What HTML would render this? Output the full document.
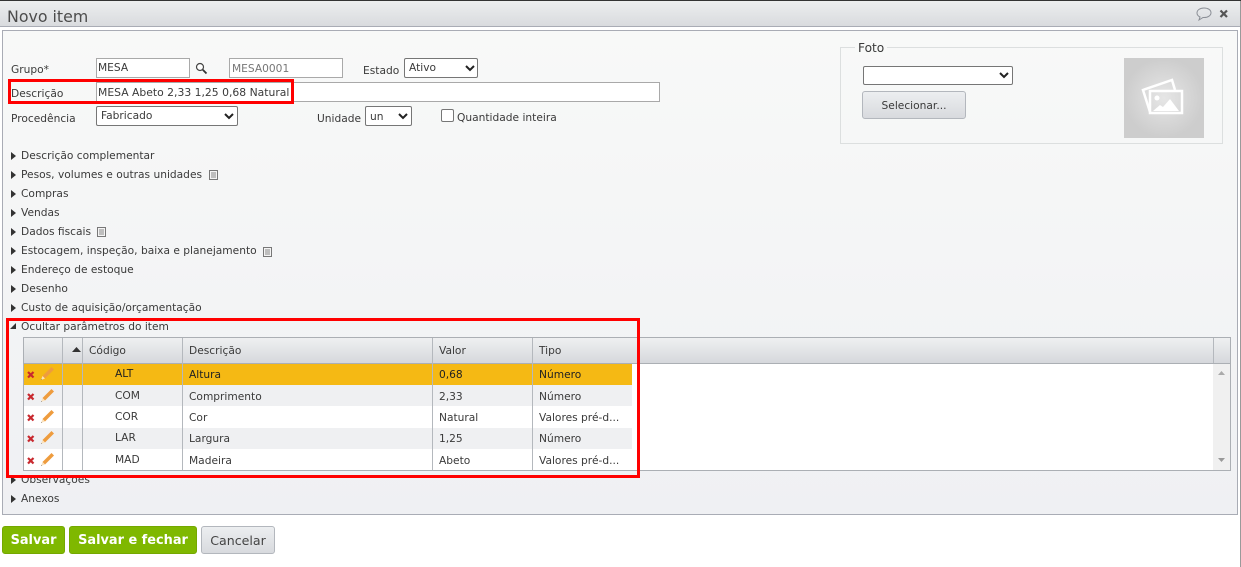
<!DOCTYPE html>
<html lang="pt"><head><meta charset="utf-8"><title>Novo item</title>
<style>
html,body{margin:0;padding:0;background:#fff}
#p{position:relative;width:1241px;height:567px;overflow:hidden;background:#fff;font-family:"DejaVu Sans","Liberation Sans",sans-serif;font-size:10.65px;color:#3a3a3a}
#p div,#p svg{position:absolute}
.t{white-space:nowrap;line-height:14px;height:14px;transform:translateY(1px)}
.in{background:#fff;border:1px solid #a9a9a9;box-sizing:border-box}
.sel{background:#fff;border:1px solid #767676;border-radius:2px;box-sizing:border-box}
.r{border:3px solid #f00;box-sizing:border-box}
.v{width:1px;background:#b4b8bd}
.a{width:0;height:0;border-left:5px solid #333;border-top:4px solid transparent;border-bottom:4px solid transparent;transform:translateY(1px)}
.b{border-radius:3px;box-sizing:border-box;text-align:center;line-height:27px;height:28px;top:526px}
.g{background:#7fb800;border:1px solid #74a800;color:#fff;font-weight:bold;font-size:12.9px}
</style></head><body><div id="p">
<div style="left:0;top:0;width:1241px;height:1px;background:#333"></div>
<div style="left:0;top:1px;width:1241px;height:25px;background:linear-gradient(#eceeef,#d9dbde)"></div>
<div style="left:0;top:26px;width:1241px;height:1px;background:#a9acb5"></div>
<div style="left:1240px;top:1px;width:1px;height:566px;background:#9a9a9a"></div>
<div class="t" style="left:7px;top:7px;height:18px;line-height:18px;font-size:15.8px;color:#4c4c4c">Novo item</div>
<svg style="left:1195px;top:6px" width="18" height="16" viewBox="0 0 18 16"><path d="M9 2C5 2 2 4 2 7c0 2 1 3 3 4l-1 3 4-2.500h1c4 0 7-2 7-4.800S13 2 9 2z" fill="none" stroke="#8b8f96"/></svg>
<svg style="left:1219px;top:9px" width="10" height="10" viewBox="0 0 10 10"><path d="M1.500 1.500l6.500 6.500M8 1.500L1.500 8" stroke="#555" stroke-width="2.200"/></svg>

<div style="left:2px;top:30px;width:1236px;height:485px;box-sizing:border-box;border:1px solid #a9acb5;background:linear-gradient(#f8f9f8,#eff0f3)"></div>

<div class="t" style="left:11px;top:62px">Grupo*</div>
<div class="in" style="left:96px;top:58px;width:94px;height:20px"></div>
<div class="t" style="left:98px;top:60px">MESA</div>
<svg style="left:195px;top:62px" width="13" height="13" viewBox="0 0 13 13"><circle cx="5" cy="5" r="3.500" fill="#fff" stroke="#444" stroke-width="1.200"/><path d="M7.800 7.800L11.500 11.500" stroke="#333" stroke-width="1.800"/></svg>
<div class="in" style="left:229px;top:58px;width:114px;height:20px"></div>
<div class="t" style="left:232px;top:61px;color:#777">MESA0001</div>
<div class="t" style="left:363px;top:63px">Estado</div>
<div class="sel" style="left:404px;top:58px;width:74px;height:20px"></div>
<div class="t" style="left:409px;top:60px">Ativo</div>
<svg style="left:465px;top:65px" width="10" height="7" viewBox="0 0 10 7"><path d="M1 1l4 4 4-4" fill="none" stroke="#222" stroke-width="2"/></svg>

<div class="in" style="left:96px;top:82px;width:564px;height:20px"></div>
<div class="t" style="left:98px;top:85px;font-size:10.8px">MESA Abeto 2,33 1,25 0,68 Natural</div>
<div class="t" style="left:11px;top:86px">Descrição</div>
<div class="r" style="left:8px;top:79px;width:286px;height:25px"></div>

<div class="t" style="left:11px;top:111px">Procedência</div>
<div class="sel" style="left:96px;top:106px;width:142px;height:20px"></div>
<div class="t" style="left:101px;top:108px">Fabricado</div>
<svg style="left:224px;top:113px" width="10" height="7" viewBox="0 0 10 7"><path d="M1 1l4 4 4-4" fill="none" stroke="#222" stroke-width="2"/></svg>
<div class="t" style="left:317px;top:111px">Unidade</div>
<div class="sel" style="left:365px;top:106px;width:47px;height:20px"></div>
<div class="t" style="left:370px;top:109px">un</div>
<svg style="left:398px;top:113px" width="10" height="7" viewBox="0 0 10 7"><path d="M1 1l4 4 4-4" fill="none" stroke="#222" stroke-width="2"/></svg>
<div style="left:441px;top:109px;width:13px;height:13px;box-sizing:border-box;border:1px solid #767676;border-radius:2px;background:#fff"></div>
<div class="t" style="left:457px;top:110px">Quantidade inteira</div>

<div style="left:840px;top:47px;width:383px;height:97px;box-sizing:border-box;border:1px solid #dcdfdf"></div>
<div class="t" style="left:855px;top:40px;padding:0 3px;background:#f8f9f8;font-size:12.2px">Foto</div>
<div class="sel" style="left:863px;top:66px;width:150px;height:19px"></div>
<svg style="left:999px;top:72px" width="10" height="7" viewBox="0 0 10 7"><path d="M1 1l4 4 4-4" fill="none" stroke="#222" stroke-width="2"/></svg>
<div class="t" style="left:862px;top:91px;width:104px;height:28px;line-height:28px;text-align:center;box-sizing:border-box;border:1px solid #b3b7bd;border-radius:3px;background:linear-gradient(#eceef0,#d8dade);transform:none">Selecionar...</div>
<div style="left:1124px;top:58px;width:80px;height:80px;background:radial-gradient(circle,#e6e6e6,#cdcdcd 70%)"></div>
<svg style="left:1124px;top:58px" width="80" height="80" viewBox="0 0 80 80"><path d="M26 54L19 32l29-10 3 10" fill="none" stroke="#fff" stroke-width="2.500"/><rect x="26" y="33" width="32" height="22" fill="none" stroke="#fff" stroke-width="2.500"/><circle cx="33" cy="40" r="2.500" fill="#fff"/><path d="M29 53l7-6 3 2 7-8 9 12z" fill="#fff"/></svg>

<div class="a" style="left:11px;top:151px"></div><div class="t" style="left:21px;top:148px">Descrição complementar</div>
<div class="a" style="left:11px;top:170px"></div><div class="t" style="left:21px;top:167px">Pesos, volumes e outras unidades</div>
<div class="a" style="left:11px;top:189px"></div><div class="t" style="left:21px;top:186px">Compras</div>
<div class="a" style="left:11px;top:208px"></div><div class="t" style="left:21px;top:205px">Vendas</div>
<div class="a" style="left:11px;top:227px"></div><div class="t" style="left:21px;top:224px">Dados fiscais</div>
<div class="a" style="left:11px;top:246px"></div><div class="t" style="left:21px;top:243px">Estocagem, inspeção, baixa e planejamento</div>
<div class="a" style="left:11px;top:265px"></div><div class="t" style="left:21px;top:262px">Endereço de estoque</div>
<div class="a" style="left:11px;top:284px"></div><div class="t" style="left:21px;top:281px">Desenho</div>
<div class="a" style="left:11px;top:303px"></div><div class="t" style="left:21px;top:300px">Custo de aquisição/orçamentação</div>
<svg style="left:209px;top:170px" width="10" height="11" viewBox="0 0 10 11"><rect x=".5" y=".5" width="8" height="9" fill="#f4f4f4" stroke="#777"/><path d="M2 3h5M2 5h5M2 7h5" stroke="#888"/></svg>
<svg style="left:97px;top:227px" width="10" height="11" viewBox="0 0 10 11"><rect x=".5" y=".5" width="8" height="9" fill="#f4f4f4" stroke="#777"/><path d="M2 3h5M2 5h5M2 7h5" stroke="#888"/></svg>
<svg style="left:263px;top:247px" width="10" height="11" viewBox="0 0 10 11"><rect x=".5" y=".5" width="8" height="9" fill="#f4f4f4" stroke="#777"/><path d="M2 3h5M2 5h5M2 7h5" stroke="#888"/></svg>
<svg style="left:10px;top:323px" width="7" height="7" viewBox="0 0 7 7"><path d="M0 6h6V0z" fill="#333"/></svg>
<div class="t" style="left:21px;top:319px">Ocultar parâmetros do item</div>

<div style="left:23px;top:337px;width:1208px;height:134px;box-sizing:border-box;border:1px solid #abafb4;background:#fff"></div>
<div style="left:24px;top:338px;width:1206px;height:25px;background:linear-gradient(#eff0f1,#d6d8dc)"></div>
<div style="left:24px;top:363px;width:1206px;height:1px;background:#abafb4"></div>
<div style="left:24px;top:364px;width:608px;height:21px;background:#f5b914"></div>
<div style="left:24px;top:385px;width:608px;height:21px;background:#eff0f2"></div>
<div style="left:24px;top:428px;width:608px;height:21px;background:#eff0f2"></div>
<div style="left:1213px;top:364px;width:17px;height:106px;background:#f0f0f0"></div>
<div class="v" style="left:62px;top:338px;height:132px"></div>
<div class="v" style="left:82px;top:338px;height:132px"></div>
<div class="v" style="left:182px;top:338px;height:132px"></div>
<div class="v" style="left:432px;top:338px;height:132px"></div>
<div class="v" style="left:532px;top:338px;height:132px"></div>
<div class="v" style="left:1213px;top:338px;height:25px"></div>
<svg style="left:72px;top:347px" width="9" height="5" viewBox="0 0 9 5"><path d="M0 5L4.500 0 9 5z" fill="#333"/></svg>
<svg style="left:1217px;top:370px" width="9" height="6" viewBox="0 0 9 6"><path d="M1 5L4.500 1 8 5z" fill="#aaa"/></svg>
<svg style="left:1217px;top:457px" width="9" height="6" viewBox="0 0 9 6"><path d="M1 1L4.500 5 8 1z" fill="#999"/></svg>

<div class="t" style="left:89px;top:343px">Código</div><div class="t" style="left:189px;top:343px">Descrição</div><div class="t" style="left:439px;top:343px">Valor</div><div class="t" style="left:539px;top:343px">Tipo</div>

<div class="t" style="left:115px;top:366px;color:#222">ALT</div><div class="t" style="left:189px;top:367px;color:#222">Altura</div><div class="t" style="left:439px;top:367px;color:#222">0,68</div><div class="t" style="left:539px;top:367px;color:#222">Número</div>
<div class="t" style="left:115px;top:388px">COM</div><div class="t" style="left:189px;top:389px">Comprimento</div><div class="t" style="left:439px;top:389px">2,33</div><div class="t" style="left:539px;top:389px">Número</div>
<div class="t" style="left:115px;top:409px">COR</div><div class="t" style="left:189px;top:410px">Cor</div><div class="t" style="left:439px;top:410px">Natural</div><div class="t" style="left:539px;top:410px">Valores pré-d...</div>
<div class="t" style="left:115px;top:430px">LAR</div><div class="t" style="left:189px;top:431px">Largura</div><div class="t" style="left:439px;top:431px">1,25</div><div class="t" style="left:539px;top:431px">Número</div>
<div class="t" style="left:115px;top:452px">MAD</div><div class="t" style="left:189px;top:453px">Madeira</div><div class="t" style="left:439px;top:453px">Abeto</div><div class="t" style="left:539px;top:453px">Valores pré-d...</div>

<svg style="left:26px;top:370px" width="10" height="10" viewBox="0 0 10 10"><path d="M2 2l5.500 5.500M7.500 2L2 7.500" stroke="#c8282e" stroke-width="2.200"/></svg>
<svg style="left:26px;top:392px" width="10" height="10" viewBox="0 0 10 10"><path d="M2 2l5.500 5.500M7.500 2L2 7.500" stroke="#c8282e" stroke-width="2.200"/></svg>
<svg style="left:26px;top:413px" width="10" height="10" viewBox="0 0 10 10"><path d="M2 2l5.500 5.500M7.500 2L2 7.500" stroke="#c8282e" stroke-width="2.200"/></svg>
<svg style="left:26px;top:434px" width="10" height="10" viewBox="0 0 10 10"><path d="M2 2l5.500 5.500M7.500 2L2 7.500" stroke="#c8282e" stroke-width="2.200"/></svg>
<svg style="left:26px;top:456px" width="10" height="10" viewBox="0 0 10 10"><path d="M2 2l5.500 5.500M7.500 2L2 7.500" stroke="#c8282e" stroke-width="2.200"/></svg>

<svg style="left:40px;top:366px" width="15" height="15" viewBox="0 0 15 15"><path d="M2.500 10L11.500 1l2.500 2.500-9 9z" fill="#ee9c3e"/><path d="M1 14l1.500-4 2.500 2.500z" fill="#fbe2bc"/><path d="M1 14l1-.4-.6-.6z" fill="#555"/></svg>
<svg style="left:40px;top:388px" width="15" height="15" viewBox="0 0 15 15"><path d="M2.500 10L11.500 1l2.500 2.500-9 9z" fill="#ee9c3e"/><path d="M1 14l1.500-4 2.500 2.500z" fill="#fbe2bc"/><path d="M1 14l1-.4-.6-.6z" fill="#555"/></svg>
<svg style="left:40px;top:409px" width="15" height="15" viewBox="0 0 15 15"><path d="M2.500 10L11.500 1l2.500 2.500-9 9z" fill="#ee9c3e"/><path d="M1 14l1.500-4 2.500 2.500z" fill="#fbe2bc"/><path d="M1 14l1-.4-.6-.6z" fill="#555"/></svg>
<svg style="left:40px;top:430px" width="15" height="15" viewBox="0 0 15 15"><path d="M2.500 10L11.500 1l2.500 2.500-9 9z" fill="#ee9c3e"/><path d="M1 14l1.500-4 2.500 2.500z" fill="#fbe2bc"/><path d="M1 14l1-.4-.6-.6z" fill="#555"/></svg>
<svg style="left:40px;top:452px" width="15" height="15" viewBox="0 0 15 15"><path d="M2.500 10L11.500 1l2.500 2.500-9 9z" fill="#ee9c3e"/><path d="M1 14l1.500-4 2.500 2.500z" fill="#fbe2bc"/><path d="M1 14l1-.4-.6-.6z" fill="#555"/></svg>

<div class="a" style="left:11px;top:475px"></div><div class="t" style="left:21px;top:472px">Observações</div>
<div class="a" style="left:11px;top:494px"></div><div class="t" style="left:21px;top:491px">Anexos</div>
<div class="r" style="left:6px;top:318px;width:634px;height:160px"></div>

<div class="b g" style="left:2px;width:63px">Salvar</div>
<div class="b g" style="left:69px;width:128px">Salvar e fechar</div>
<div class="b" style="left:201px;width:74px;border:1px solid #b3b7bd;background:linear-gradient(#eceef0,#d8dade);font-size:12.6px;color:#444">Cancelar</div>
</div></body></html>
